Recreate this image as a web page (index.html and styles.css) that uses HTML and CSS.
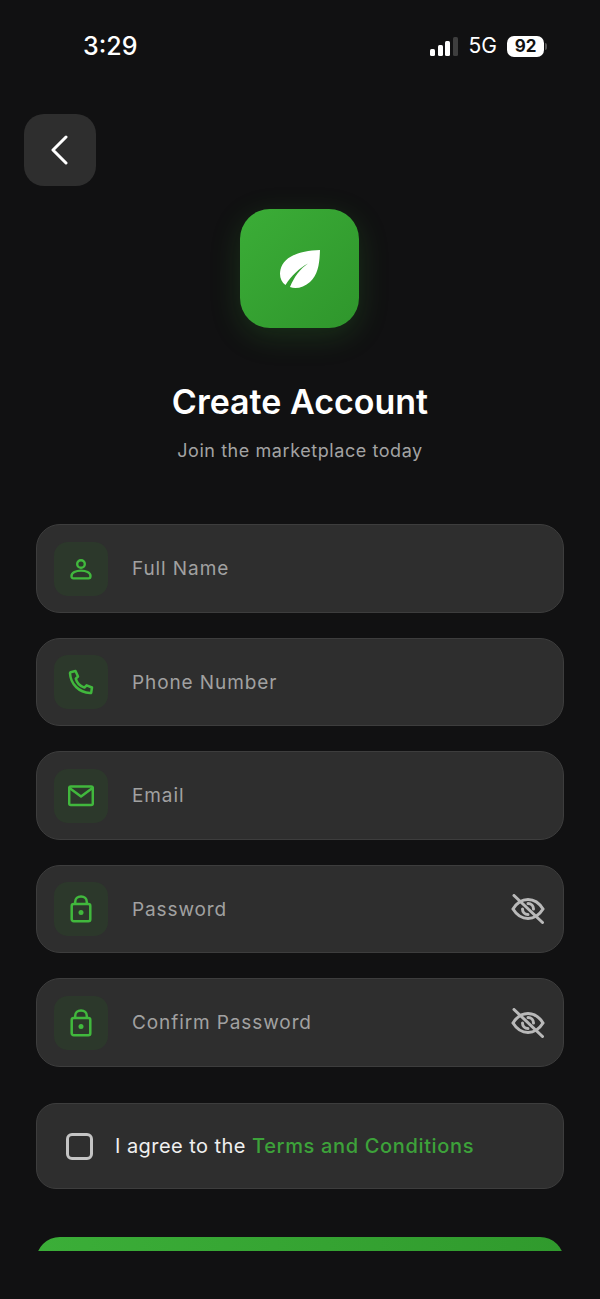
FILE: index.html
```html
<!DOCTYPE html>
<html lang="en">
<head>
    <meta charset="UTF-8">
    <meta name="viewport" content="width=device-width, initial-scale=1.0">
    <title>Create Account</title>
    <link rel="stylesheet" href="styles.css">
</head>
<body>
    <div class="screen">
        <header class="status-bar">
            <span class="clock">3:29</span>
            <div class="status-right">
                <div class="signal">
                    <i class="bar bar-1"></i>
                    <i class="bar bar-2"></i>
                    <i class="bar bar-3"></i>
                    <i class="bar bar-4"></i>
                </div>
                <span class="network">5G</span>
                <div class="battery">
                    <span class="battery-body">92</span>
                    <i class="battery-cap"></i>
                </div>
            </div>
        </header>

        <main class="content">
            <button class="back-btn" type="button" aria-label="Back">
                <svg width="20" height="30" viewBox="0 0 20 30" fill="none" stroke="#fff" stroke-width="3" stroke-linecap="round" stroke-linejoin="round">
                    <path d="M16 2 L3 15 L16 28"/>
                </svg>
            </button>

            <div class="logo">
                <svg width="42" height="40" viewBox="0 0 42 40">
                    <path fill="#fff" fill-rule="evenodd" d="M41 1 C40.5 14 39.5 25 31 33 C25 38.5 16.5 40.5 11 38 C15 28 21 20 29 14.5 C20.5 19 12.5 26.5 6.5 36 C2 33 0 27 1.5 20.5 C4.5 7.5 21 1.5 41 1 Z"/>
                </svg>
            </div>

            <h1 class="title">Create Account</h1>
            <p class="subtitle">Join the marketplace today</p>

            <form class="fields">
                <div class="field">
                    <div class="field-icon">
                        <svg width="24" height="24" viewBox="0 0 24 24" fill="none" stroke="#41b83d" stroke-width="2.4" stroke-linejoin="round">
                            <circle cx="12" cy="7" r="3.8"/>
                            <path d="M2.5 19 C2.5 15.5 7 13.6 12 13.6 C17 13.6 21.5 15.5 21.5 19 C21.5 20.6 20.8 21.4 19.5 21.4 H4.5 C3.2 21.4 2.5 20.6 2.5 19 Z"/>
                        </svg>
                    </div>
                    <span class="placeholder">Full Name</span>
                </div>

                <div class="field">
                    <div class="field-icon">
                        <svg width="26" height="26" viewBox="0 0 26 26" fill="none" stroke="#41b83d" stroke-width="2.5" stroke-linejoin="round">
                            <path d="M2.5 3.2 L7.5 2 L10 7.5 L7.8 9.6 C8.8 13.8 12.2 17.2 16.4 18.6 L18.6 16.3 L24 18.5 L23.2 23.6 C23 24 22.6 24.2 22 24 C11 23.6 2.6 15 2 4.2 C2 3.7 2.2 3.4 2.5 3.2 Z"/>
                        </svg>
                    </div>
                    <span class="placeholder">Phone Number</span>
                </div>

                <div class="field">
                    <div class="field-icon">
                        <svg width="26" height="22" viewBox="0 0 26 22" fill="none" stroke="#41b83d" stroke-width="2.5" stroke-linejoin="round">
                            <rect x="1.2" y="1.5" width="23.6" height="18.5" rx="1.5"/>
                            <path d="M1.5 3 L13 11.5 L24.5 3"/>
                        </svg>
                    </div>
                    <span class="placeholder">Email</span>
                </div>

                <div class="field">
                    <div class="field-icon">
                        <svg width="22" height="28" viewBox="0 0 22 28" fill="none" stroke="#41b83d" stroke-width="2.5">
                            <rect x="1.7" y="9" width="18.6" height="17.3" rx="2"/>
                            <path d="M5.2 9 V7 C5.2 3.6 7.6 1.6 11 1.6 C14.4 1.6 16.8 3.6 16.8 7 V9"/>
                            <circle cx="11" cy="17.6" r="2.5" fill="#41b83d" stroke="none"/>
                        </svg>
                    </div>
                    <span class="placeholder">Password</span>
                    <svg class="eye" width="34" height="30" viewBox="0 0 34 30" fill="none" stroke="#b9b9b9" stroke-width="3" stroke-linecap="round">
                        <path d="M2 15 C6 8.5 11 5.5 17 5.5 C23 5.5 28 8.5 32 15 C28 21.5 23 24.5 17 24.5 C11 24.5 6 21.5 2 15 Z"/>
                        <path d="M17 9.5 A5.5 5.5 0 0 1 22.5 15 M17 20.5 A5.5 5.5 0 0 1 11.5 15"/>
                        <path d="M3 1.5 L31.5 28.5"/>
                    </svg>
                </div>

                <div class="field">
                    <div class="field-icon">
                        <svg width="22" height="28" viewBox="0 0 22 28" fill="none" stroke="#41b83d" stroke-width="2.5">
                            <rect x="1.7" y="9" width="18.6" height="17.3" rx="2"/>
                            <path d="M5.2 9 V7 C5.2 3.6 7.6 1.6 11 1.6 C14.4 1.6 16.8 3.6 16.8 7 V9"/>
                            <circle cx="11" cy="17.6" r="2.5" fill="#41b83d" stroke="none"/>
                        </svg>
                    </div>
                    <span class="placeholder">Confirm Password</span>
                    <svg class="eye" width="34" height="30" viewBox="0 0 34 30" fill="none" stroke="#b9b9b9" stroke-width="3" stroke-linecap="round">
                        <path d="M2 15 C6 8.5 11 5.5 17 5.5 C23 5.5 28 8.5 32 15 C28 21.5 23 24.5 17 24.5 C11 24.5 6 21.5 2 15 Z"/>
                        <path d="M17 9.5 A5.5 5.5 0 0 1 22.5 15 M17 20.5 A5.5 5.5 0 0 1 11.5 15"/>
                        <path d="M3 1.5 L31.5 28.5"/>
                    </svg>
                </div>

                <div class="terms">
                    <i class="checkbox"></i>
                    <span class="terms-text">I agree to the <a class="terms-link">Terms and Conditions</a></span>
                </div>

                <button class="submit" type="button"></button>
            </form>
        </main>
    </div>
</body>
</html>
```

FILE: styles.css
```css
* {
    box-sizing: border-box;
}

html, body {
    margin: 0;
    padding: 0;
    background-color: #111112;
}

body {
    font-family: Inter, "Liberation Sans", sans-serif;
    color: #fff;
}

.screen {
    width: 600px;
    height: 1299px;
    overflow: hidden;
}

/* status bar */
.status-bar {
    height: 92px;
    padding: 30px 53px 0 83px;
    display: flex;
    justify-content: space-between;
    align-items: flex-start;
}

.clock {
    font-size: 25px;
    line-height: 32px;
    font-weight: 500;
}

.status-right {
    display: flex;
    align-items: center;
    height: 32px;
}

.signal {
    display: flex;
    align-items: flex-end;
    gap: 2.5px;
    height: 20px;
    margin-right: 11px;
}

.bar {
    display: block;
    width: 5px;
    border-radius: 1.5px;
    background-color: #fff;
}

.bar-1 { height: 7px; }
.bar-2 { height: 11px; }
.bar-3 { height: 15px; }
.bar-4 { height: 19px; background-color: #3e3e3e; }

.network {
    font-size: 21px;
    line-height: 32px;
    margin-right: 10px;
}

.battery {
    display: flex;
    align-items: center;
    gap: 1px;
}

.battery-body {
    width: 37px;
    height: 21px;
    border-radius: 7px;
    background-color: #fff;
    color: #111;
    font-size: 17px;
    font-weight: 700;
    line-height: 21px;
    text-align: center;
}

.battery-cap {
    display: block;
    width: 2px;
    height: 7px;
    border-radius: 0 2px 2px 0;
    background-color: #555;
}

/* main column */
.content {
    height: 1159px;
    overflow: hidden;
    padding: 22px 36px 0;
    display: flex;
    flex-direction: column;
    align-items: center;
}

.back-btn {
    align-self: flex-start;
    flex: none;
    width: 72px;
    height: 72px;
    margin-left: -12px;
    padding: 0;
    border: none;
    border-radius: 20px;
    background-color: #2e2e2e;
    display: flex;
    align-items: center;
    justify-content: center;
}

.logo {
    flex: none;
    width: 119px;
    height: 119px;
    margin-top: 23px;
    margin-left: -1px;
    border-radius: 30px;
    background: linear-gradient(135deg, #3bad37, #2f962c);
    box-shadow: 0 8px 30px rgba(56, 160, 52, 0.22);
    display: flex;
    align-items: center;
    justify-content: center;
}

.title {
    margin: 51px 0 0;
    font-size: 34px;
    line-height: 45px;
    font-weight: 600;
}

.subtitle {
    margin: 15px 0 0;
    font-size: 18px;
    line-height: 24px;
    letter-spacing: 0.57px;
    color: #a3a3a3;
}

.fields {
    width: 528px;
    margin-top: 61px;
    display: flex;
    flex-direction: column;
    gap: 25px;
}

.field {
    flex: none;
    height: 88.5px;
    padding: 1px 18px 0;
    border: 1px solid #3d3d3d;
    border-radius: 24px;
    background-color: #2e2e2e;
    display: flex;
    align-items: center;
}

.field-icon {
    flex: none;
    width: 54px;
    height: 54px;
    margin-left: -1px;
    margin-right: 24px;
    border-radius: 14px;
    background-color: #2c382b;
    display: flex;
    align-items: center;
    justify-content: center;
}

.placeholder {
    flex: 1;
    font-size: 19px;
    letter-spacing: 0.9px;
    color: #a1a1a1;
}

.eye {
    flex: none;
    margin-right: 0;
}

.terms {
    flex: none;
    height: 86px;
    margin-top: 11px;
    padding: 1px 29px 0;
    border: 1px solid #3d3d3d;
    border-radius: 20px;
    background-color: #2e2e2e;
    display: flex;
    align-items: center;
    gap: 22px;
}

.checkbox {
    display: block;
    flex: none;
    width: 27px;
    height: 27px;
    border: 3px solid #c4c4c4;
    border-radius: 6px;
}

.terms-text {
    font-size: 20px;
    letter-spacing: 0.45px;
    color: #f0f0f0;
}

.terms-link {
    font-weight: 500;
    letter-spacing: 0.65px;
    color: #3da23a;
}

.submit {
    flex: none;
    height: 72px;
    margin-top: 23px;
    border: none;
    border-radius: 24px;
    background: linear-gradient(90deg, #3bae38, #309a2d);
}
```
